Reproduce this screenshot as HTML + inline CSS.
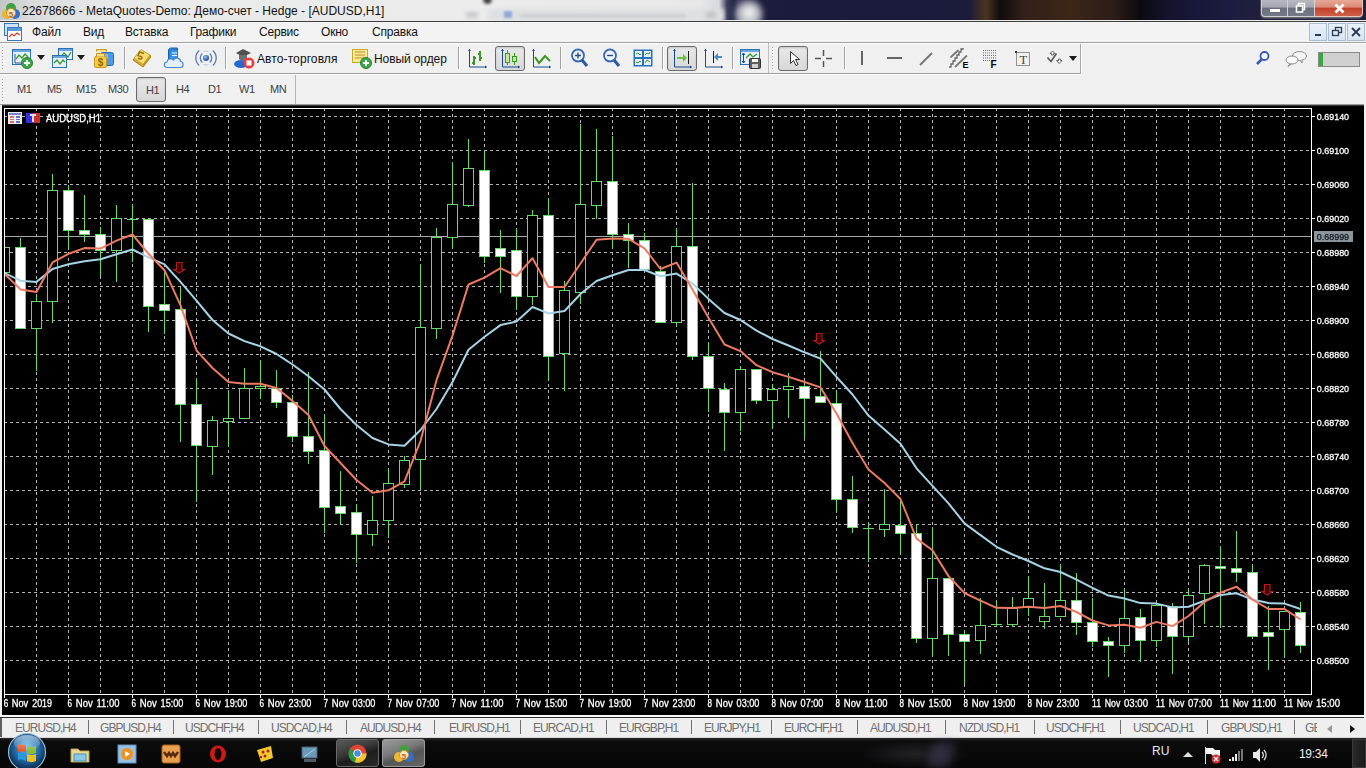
<!DOCTYPE html>
<html><head><meta charset="utf-8"><style>
*{box-sizing:border-box}
body{margin:0;width:1366px;height:768px;overflow:hidden;position:relative;background:#f0f0f0;font-family:"Liberation Sans",sans-serif;}
.a{position:absolute}
svg.a{overflow:visible}
</style></head><body>
<div class="a" style="left:0;top:0;width:1366px;height:21px;background:linear-gradient(90deg,#c4c6c8 0,#d8dadb 30px,#e8e9e9 110px,#ececec 480px,#e8e8e9 700px,#d8d9dc 719px,#3c3c5c 727px,#262648 734px,#3a3a5a 738px,#1c1c3e 762px,#1a1a3c 900px,#1c1c3a 970px,#4a3420 986px,#100c0c 1000px,#34201a 1025px,#3c2618 1070px,#2c1c18 1115px,#0c0a10 1140px,#141430 1170px,#1c1c42 1230px,#20203c 1260px)"></div>
<div class="a" style="left:736px;top:1px;width:26px;height:26px;border-radius:50%;background:#c4c8cc;filter:blur(3px)"></div>
<div class="a" style="left:744px;top:8px;width:10px;height:10px;border-radius:50%;background:#e8eaec;filter:blur(2px)"></div>
<div class="a" style="left:0;top:20px;width:1366px;height:1px;background:#eaeaea"></div>
<div class="a" style="left:488px;top:9px;width:236px;height:12px;background:#dedfe1;filter:blur(2px)"></div>
<div class="a" style="left:520px;top:14px;width:165px;height:4px;background:#cfd0d3;filter:blur(1.5px)"></div>
<div class="a" style="left:504px;top:11px;width:8px;height:7px;background:#8fa8d8;filter:blur(1px)"></div>
<div class="a" style="left:483px;top:-4px;width:9px;height:8px;border-radius:50%;background:#444;filter:blur(1.5px)"></div>
<div class="a" style="left:466px;top:12px;width:12px;height:6px;background:#c8c8cc;filter:blur(2px)"></div>
<div class="a" style="left:706px;top:12px;width:10px;height:6px;background:#c0c0c4;filter:blur(2px)"></div>
<svg class="a" style="left:1px;top:1px" width="20" height="20" viewBox="0 0 20 20"><circle cx="6" cy="13" r="5" fill="#e8b830"/><circle cx="14" cy="13" r="5" fill="#3070c8"/><circle cx="10" cy="7" r="5" fill="#40a040"/><circle cx="10" cy="12" r="4.5" fill="#f4e8c0" stroke="#d89030" stroke-width="1"/><text x="10" y="15.5" font-size="8" font-family="Liberation Sans" font-weight="bold" fill="#c86020" text-anchor="middle">5</text></svg>
<div class="a" style="left:22px;top:5px;font-size:12px;color:#111;white-space:nowrap;line-height:1">22678666 - MetaQuotes-Demo: Демо-счет - Hedge - [AUDUSD,H1]</div>
<div class="a" style="left:1260px;top:0;width:103px;height:19px;border:1px solid #4a4a5a;border-top:none;border-radius:0 0 5px 5px;background:#666"></div>
<div class="a" style="left:1261px;top:0;width:27px;height:17px;border-radius:0 0 0 4px;background:linear-gradient(#b8b8c0 0,#a4a6ae 45%,#6c707e 50%,#747888 100%);border:1px solid #d0d0d8;border-top:none"></div>
<div class="a" style="left:1288px;top:0;width:27px;height:17px;background:linear-gradient(#b8b8c0 0,#a4a6ae 45%,#6c707e 50%,#747888 100%);border:1px solid #d0d0d8;border-top:none;border-left:none"></div>
<div class="a" style="left:1315px;top:0;width:48px;height:17px;border-radius:0 0 4px 0;background:linear-gradient(#e8a898 0,#dc8a76 45%,#c4402a 50%,#d06048 100%);border:1px solid #e8c8c0;border-top:none;border-left:none"></div>
<div class="a" style="left:1270px;top:9px;width:10px;height:3px;background:#fff;box-shadow:0 0 1px #333"></div>
<svg class="a" style="left:1295px;top:2px" width="12" height="12" viewBox="0 0 12 12"><rect x="3.5" y="1.5" width="6" height="6" fill="none" stroke="#fff" stroke-width="1.6"/><rect x="1.5" y="4" width="6" height="6" fill="#666" stroke="#fff" stroke-width="1.6"/></svg>
<svg class="a" style="left:1333px;top:2px" width="13" height="13" viewBox="0 0 13 13"><path d="M2.5 2.5L10.5 10.5M10.5 2.5L2.5 10.5" stroke="#fff" stroke-width="2.8"/></svg>
<div class="a" style="left:0;top:21px;width:1366px;height:1px;background:#404040"></div>
<div class="a" style="left:0;top:22px;width:1366px;height:20px;background:#f3f3f3"></div>
<div class="a" style="left:0;top:42px;width:1366px;height:1px;background:#a0a0a0"></div>
<div class="a" style="left:0;top:43px;width:1366px;height:1px;background:#fdfdfd"></div>
<svg class="a" style="left:3px;top:22px" width="20" height="20" viewBox="0 0 20 20"><rect x="1.5" y="1.5" width="14" height="12" fill="#cfe2f6" stroke="#3a78c0"/><rect x="4.5" y="5.5" width="14" height="13" fill="#fff" stroke="#3a78c0"/><rect x="5" y="6" width="13" height="3" fill="#5b9ad8"/><path d="M6 15l3-3 2 2 3-3 3 2" fill="none" stroke="#d04020" stroke-width="1.2"/></svg>
<div class="a" style="left:32px;top:26px;font-size:12px;color:#111;white-space:nowrap;line-height:1;letter-spacing:-0.2px">Файл</div>
<div class="a" style="left:83px;top:26px;font-size:12px;color:#111;white-space:nowrap;line-height:1;letter-spacing:-0.2px">Вид</div>
<div class="a" style="left:125px;top:26px;font-size:12px;color:#111;white-space:nowrap;line-height:1;letter-spacing:-0.2px">Вставка</div>
<div class="a" style="left:190px;top:26px;font-size:12px;color:#111;white-space:nowrap;line-height:1;letter-spacing:-0.2px">Графики</div>
<div class="a" style="left:259px;top:26px;font-size:12px;color:#111;white-space:nowrap;line-height:1;letter-spacing:-0.2px">Сервис</div>
<div class="a" style="left:321px;top:26px;font-size:12px;color:#111;white-space:nowrap;line-height:1;letter-spacing:-0.2px">Окно</div>
<div class="a" style="left:372px;top:26px;font-size:12px;color:#111;white-space:nowrap;line-height:1;letter-spacing:-0.2px">Справка</div>
<div class="a" style="left:1309px;top:23px;width:18px;height:18px;background:linear-gradient(#eaf2fa,#d6e4f2);border:1px solid #a9bdd6"></div>
<svg class="a" style="left:1309px;top:23px" width="18" height="18" viewBox="0 0 18 18"><rect x="6" y="11" width="6" height="2" fill="#2a3a50"/></svg>
<div class="a" style="left:1328px;top:23px;width:18px;height:18px;background:linear-gradient(#eaf2fa,#d6e4f2);border:1px solid #a9bdd6"></div>
<svg class="a" style="left:1328px;top:23px" width="18" height="18" viewBox="0 0 18 18"><rect x="7.5" y="4.5" width="6" height="5" fill="none" stroke="#2a3a50" stroke-width="1.3"/><rect x="4.5" y="7.5" width="6" height="5" fill="#dde8f4" stroke="#2a3a50" stroke-width="1.3"/></svg>
<div class="a" style="left:1347px;top:23px;width:18px;height:18px;background:linear-gradient(#eaf2fa,#d6e4f2);border:1px solid #a9bdd6"></div>
<svg class="a" style="left:1347px;top:23px" width="18" height="18" viewBox="0 0 18 18"><path d="M5 5L13 13M13 5L5 13" stroke="#2a3a50" stroke-width="1.8"/></svg>
<div class="a" style="left:0;top:44px;width:1366px;height:29px;background:#f0f0f0"></div>
<div class="a" style="left:0;top:73px;width:1081px;height:1px;background:#a0a0a0"></div>
<div class="a" style="left:0;top:74px;width:1081px;height:1px;background:#fdfdfd"></div>
<svg class="a" style="left:1px;top:45px" width="4" height="27" viewBox="0 0 4 27"><rect x="1" y="2" width="1" height="1" fill="#a8a8a8"/><rect x="2" y="3" width="1" height="1" fill="#fff"/><rect x="1" y="5" width="1" height="1" fill="#a8a8a8"/><rect x="2" y="6" width="1" height="1" fill="#fff"/><rect x="1" y="8" width="1" height="1" fill="#a8a8a8"/><rect x="2" y="9" width="1" height="1" fill="#fff"/><rect x="1" y="11" width="1" height="1" fill="#a8a8a8"/><rect x="2" y="12" width="1" height="1" fill="#fff"/><rect x="1" y="14" width="1" height="1" fill="#a8a8a8"/><rect x="2" y="15" width="1" height="1" fill="#fff"/><rect x="1" y="17" width="1" height="1" fill="#a8a8a8"/><rect x="2" y="18" width="1" height="1" fill="#fff"/><rect x="1" y="20" width="1" height="1" fill="#a8a8a8"/><rect x="2" y="21" width="1" height="1" fill="#fff"/><rect x="1" y="23" width="1" height="1" fill="#a8a8a8"/><rect x="2" y="24" width="1" height="1" fill="#fff"/></svg>
<svg class="a" style="left:12px;top:48px" width="22" height="21" viewBox="0 0 22 21"><rect x="0.5" y="1.5" width="18" height="15" fill="#e6f0fa" stroke="#2f6fb8"/><rect x="1" y="2" width="17" height="2" fill="#6aa6de"/><path d="M3 6v9h13" stroke="#2a5a90" fill="none"/><path d="M4 11l3-4 3 3 3-4 3 3" stroke="#3a9a30" fill="none" stroke-width="1.3"/><circle cx="15" cy="15" r="5.5" fill="#3aa84a" stroke="#2a8030"/><path d="M12 15h6M15 12v6" stroke="#fff" stroke-width="1.8"/></svg>
<svg class="a" style="left:37px;top:55px" width="8" height="5" viewBox="0 0 8 5"><path d="M0 0h8L4 5z" fill="#1a1a1a"/></svg>
<svg class="a" style="left:52px;top:48px" width="22" height="21" viewBox="0 0 22 21"><rect x="6.5" y="0.5" width="14" height="11" fill="#e6f0fa" stroke="#2f6fb8"/><rect x="7" y="1" width="13" height="2" fill="#6aa6de"/><path d="M8 10l4-5 4 4 3-5" stroke="#3a9a30" fill="none" stroke-width="1.2"/><rect x="0.5" y="7.5" width="14" height="12" fill="#e6f0fa" stroke="#2f6fb8"/><rect x="1" y="8" width="13" height="2" fill="#6aa6de"/><path d="M2 15l3-3 3 4 3-4 2 2" stroke="#3a9a30" fill="none" stroke-width="1.3"/></svg>
<svg class="a" style="left:77px;top:55px" width="8" height="5" viewBox="0 0 8 5"><path d="M0 0h8L4 5z" fill="#1a1a1a"/></svg>
<svg class="a" style="left:93px;top:47px" width="22" height="22" viewBox="0 0 22 22"><path d="M3.5 4.5v-2h10v2" fill="#f4d870" stroke="#c8a030"/><rect x="7.5" y="5.5" width="13" height="13" rx="2" fill="#4a9ae8" stroke="#2a68b0"/><rect x="9" y="7" width="6" height="5" fill="#9ad0f8" opacity=".6"/><rect x="1.5" y="9.5" width="12" height="11" rx="1.5" fill="#f4cc40" stroke="#c89820"/><path d="M3.5 9.5v-3h8v3" fill="#f8e080" stroke="#c89820"/><text x="7.5" y="19" font-size="10" font-weight="bold" font-family="Liberation Sans" fill="#8a6a10" text-anchor="middle">$</text></svg>
<div class="a" style="left:124px;top:47px;width:1px;height:22px;background:#a0a0a0"></div><div class="a" style="left:125px;top:47px;width:1px;height:22px;background:#fff"></div>
<svg class="a" style="left:131px;top:47px" width="22" height="22" viewBox="0 0 22 22"><path d="M2 13L10 3l10 6-8 11z" fill="#d8b030" stroke="#a88018"/><path d="M3 11L10 2.5l9 5.5-7 9.5z" fill="#f4dc70" stroke="#c09a28" stroke-width=".8"/><path d="M12 17.5l8-9v2l-8 10z" fill="#b89020"/><path d="M13 6.5l-4.5-1.5-1.5 3.5 3 1c1.5.5 1 3-1 2.5l-2-.8" fill="none" stroke="#9a7010" stroke-width="1.5"/></svg>
<svg class="a" style="left:163px;top:47px" width="22" height="22" viewBox="0 0 22 22"><path d="M5.5 2.5l2-1.5h7v11h-9z" fill="#2a80d8" stroke="#1a60b0"/><rect x="7.5" y="3.5" width="7" height="9" fill="#3a98e8"/><path d="M9 6h5M9 8.5h5" stroke="#e8f4ff" stroke-width="1.2"/><path d="M4 20.5c-3.5 0-3.5-5.5 0-5.5.5-3.5 4.5-4 6.5-2 1.5-3 7-2.5 7 1.5 3.5 0 3.5 6 0 6z" fill="#e4f0fa" stroke="#4a88cc" stroke-width="1.2"/></svg>
<svg class="a" style="left:195px;top:47px" width="22" height="22" viewBox="0 0 22 22"><defs><radialGradient id="sg" cx="40%" cy="35%"><stop offset="0" stop-color="#a8c8f0"/><stop offset="1" stop-color="#2a5ab0"/></radialGradient></defs><circle cx="11" cy="11" r="3" fill="url(#sg)"/><path d="M7.3 6.5a6 6 0 0 0 0 9M14.7 6.5a6 6 0 0 1 0 9M4.2 3.5a10 10 0 0 0 0 15M17.8 3.5a10 10 0 0 1 0 15" stroke="#5a78b8" fill="none" stroke-width="1.3"/><path d="M8.5 4.5a7 7 0 0 1 5 0M8.5 17.5a7 7 0 0 0 5 0" stroke="#b8c8e0" fill="none"/></svg>
<div class="a" style="left:225px;top:47px;width:1px;height:22px;background:#a0a0a0"></div><div class="a" style="left:226px;top:47px;width:1px;height:22px;background:#fff"></div>
<svg class="a" style="left:233px;top:48px" width="22" height="21" viewBox="0 0 22 21"><path d="M3 5l7-4 8 4-8 4z" fill="#505050"/><path d="M6 7v4c2 2 6 2 8 0V7" fill="#707070"/><ellipse cx="8" cy="16" rx="7" ry="4" fill="#2a6ad0"/><circle cx="16" cy="15" r="5.5" fill="#e84040"/><rect x="13.5" y="12.5" width="5" height="5" fill="#fff"/></svg>
<div class="a" style="left:257px;top:53px;font-size:12px;color:#111;white-space:nowrap;line-height:1;letter-spacing:0.1px">Авто-торговля</div>
<svg class="a" style="left:351px;top:48px" width="22" height="21" viewBox="0 0 22 21"><rect x="1.5" y="1.5" width="15" height="13" fill="#f8e890" stroke="#c8a830"/><path d="M4 4h10M4 7h10M4 10h10" stroke="#b89030"/><circle cx="15" cy="15" r="5.5" fill="#3aa84a" stroke="#2a8030"/><path d="M12 15h6M15 12v6" stroke="#fff" stroke-width="1.8"/></svg>
<div class="a" style="left:374px;top:53px;font-size:12px;color:#111;white-space:nowrap;line-height:1;letter-spacing:-0.1px">Новый ордер</div>
<div class="a" style="left:458px;top:47px;width:1px;height:22px;background:#a0a0a0"></div><div class="a" style="left:459px;top:47px;width:1px;height:22px;background:#fff"></div>
<svg class="a" style="left:467px;top:48px" width="21" height="21" viewBox="0 0 21 21"><path d="M2.5 1v18h17" stroke="#1a4a90" fill="none"/><path d="M1 3l1.5-2 1.5 2M18 17.5l2 1.5-2 1.5" fill="#1a4a90"/><path d="M7 8v9M5 15h2M7 10h2M13 3v10M11 6h2M13 10h2" stroke="#3a9a20" stroke-width="2"/></svg>
<div class="a" style="left:495px;top:46px;width:30px;height:25px;border:1px solid #6a6a6a;border-radius:3px;background:linear-gradient(#e8e8e8,#d8d8d8);box-shadow:inset 0 1px 2px rgba(0,0,0,.15)"></div>
<svg class="a" style="left:500px;top:48px" width="21" height="21" viewBox="0 0 21 21"><path d="M2.5 1v18h17" stroke="#1a4a90" fill="none"/><path d="M1 3l1.5-2 1.5 2M18 17.5l2 1.5-2 1.5" fill="#1a4a90"/><path d="M7.5 2v15M14.5 5v12" stroke="#3a9a20"/><rect x="5.5" y="5.5" width="4" height="9" fill="#c8e8a0" stroke="#3a9a20"/><rect x="12.5" y="8.5" width="4" height="5" fill="#c8e8a0" stroke="#3a9a20"/></svg>
<svg class="a" style="left:531px;top:48px" width="21" height="21" viewBox="0 0 21 21"><path d="M2.5 1v18h17" stroke="#1a4a90" fill="none"/><path d="M1 3l1.5-2 1.5 2M18 17.5l2 1.5-2 1.5" fill="#1a4a90"/><path d="M4 9l4 6 6-7 5 5" stroke="#3a9a20" fill="none" stroke-width="2"/></svg>
<div class="a" style="left:560px;top:47px;width:1px;height:22px;background:#a0a0a0"></div><div class="a" style="left:561px;top:47px;width:1px;height:22px;background:#fff"></div>
<svg class="a" style="left:570px;top:48px" width="20" height="21" viewBox="0 0 20 21"><circle cx="8" cy="7.5" r="6" fill="#eef4fc" stroke="#3a68b0" stroke-width="1.8"/><path d="M5 7.5h6M8 4.5v6" stroke="#2a4a80" stroke-width="1.4"/><path d="M12 12l5 6" stroke="#2a58a0" stroke-width="3"/></svg>
<svg class="a" style="left:602px;top:48px" width="20" height="21" viewBox="0 0 20 21"><circle cx="8" cy="7.5" r="6" fill="#eef4fc" stroke="#3a68b0" stroke-width="1.8"/><path d="M5 7.5h6" stroke="#2a4a80" stroke-width="1.4"/><path d="M12 12l5 6" stroke="#2a58a0" stroke-width="3"/></svg>
<svg class="a" style="left:633px;top:48px" width="21" height="21" viewBox="0 0 21 21"><rect x="0.5" y="1.5" width="19" height="17" fill="#2a70c0"/><rect x="2" y="3" width="7" height="6" fill="#e8f2fc"/><rect x="11" y="3" width="7" height="6" fill="#e8f2fc"/><rect x="2" y="11" width="7" height="6" fill="#e8f2fc"/><rect x="11" y="11" width="7" height="6" fill="#e8f2fc"/><path d="M3 6l2-1 2 2 1-1M12 7l2-2 2 1 1-2M3 14l2 1 2-2 1 1M12 15l2-3 3 2" stroke="#3a9a30" fill="none"/></svg>
<div class="a" style="left:662px;top:47px;width:1px;height:22px;background:#a0a0a0"></div><div class="a" style="left:663px;top:47px;width:1px;height:22px;background:#fff"></div>
<div class="a" style="left:667px;top:46px;width:30px;height:25px;border:1px solid #6a6a6a;border-radius:3px;background:linear-gradient(#e8e8e8,#d8d8d8);box-shadow:inset 0 1px 2px rgba(0,0,0,.15)"></div>
<svg class="a" style="left:672px;top:48px" width="21" height="21" viewBox="0 0 21 21"><path d="M2.5 1v18h17" stroke="#1a4a90" fill="none"/><path d="M1 3l1.5-2 1.5 2M18 17.5l2 1.5-2 1.5" fill="#1a4a90"/><path d="M16.5 3v13" stroke="#1a1a1a"/><path d="M5 9h6V6l4 4-4 4v-3H5z" fill="#6ac040"/></svg>
<svg class="a" style="left:703px;top:48px" width="21" height="21" viewBox="0 0 21 21"><path d="M2.5 1v18h17" stroke="#1a4a90" fill="none"/><path d="M1 3l1.5-2 1.5 2M18 17.5l2 1.5-2 1.5" fill="#1a4a90"/><path d="M10.5 3v12" stroke="#1a1a1a"/><path d="M19 8h-4V5l-4 4 4 4v-3h4z" fill="#4a8ad0"/></svg>
<div class="a" style="left:732px;top:47px;width:1px;height:22px;background:#a0a0a0"></div><div class="a" style="left:733px;top:47px;width:1px;height:22px;background:#fff"></div>
<svg class="a" style="left:740px;top:48px" width="22" height="21" viewBox="0 0 22 21"><rect x="0.5" y="1.5" width="19" height="15" fill="#e6f0fa" stroke="#2f6fb8"/><rect x="1" y="2" width="18" height="2" fill="#6aa6de"/><path d="M3.5 5v10M2 7l1.5-2 1.5 2M2 13l1.5 2 1.5-2" stroke="#1a4a90" fill="none"/><path d="M6 10l4-4 3 3 4-3" stroke="#3a9a30" fill="none" stroke-width="1.3"/><rect x="9.5" y="10.5" width="11" height="10" rx="1" fill="#606060" stroke="#303030"/><rect x="12" y="11" width="6" height="3" fill="#fff"/><rect x="12" y="16" width="6" height="4" fill="#d0d0d0"/></svg>
<div class="a" style="left:768px;top:43px;width:1px;height:30px;background:#c0c0c0"></div>
<svg class="a" style="left:771px;top:45px" width="4" height="27" viewBox="0 0 4 27"><rect x="1" y="2" width="1" height="1" fill="#a8a8a8"/><rect x="2" y="3" width="1" height="1" fill="#fff"/><rect x="1" y="5" width="1" height="1" fill="#a8a8a8"/><rect x="2" y="6" width="1" height="1" fill="#fff"/><rect x="1" y="8" width="1" height="1" fill="#a8a8a8"/><rect x="2" y="9" width="1" height="1" fill="#fff"/><rect x="1" y="11" width="1" height="1" fill="#a8a8a8"/><rect x="2" y="12" width="1" height="1" fill="#fff"/><rect x="1" y="14" width="1" height="1" fill="#a8a8a8"/><rect x="2" y="15" width="1" height="1" fill="#fff"/><rect x="1" y="17" width="1" height="1" fill="#a8a8a8"/><rect x="2" y="18" width="1" height="1" fill="#fff"/><rect x="1" y="20" width="1" height="1" fill="#a8a8a8"/><rect x="2" y="21" width="1" height="1" fill="#fff"/><rect x="1" y="23" width="1" height="1" fill="#a8a8a8"/><rect x="2" y="24" width="1" height="1" fill="#fff"/></svg>
<div class="a" style="left:778px;top:46px;width:30px;height:25px;border:1px solid #6a6a6a;border-radius:3px;background:linear-gradient(#e8e8e8,#d8d8d8);box-shadow:inset 0 1px 2px rgba(0,0,0,.15)"></div>
<svg class="a" style="left:783px;top:48px" width="21" height="21" viewBox="0 0 21 21"><path d="M7.5 3.5v12l3-3 2.5 5 2-1-2.5-5h4z" fill="#fff" stroke="#333"/></svg>
<svg class="a" style="left:813px;top:48px" width="21" height="21" viewBox="0 0 21 21"><path d="M10.5 2v6M10.5 13v6M2 10.5h6M13 10.5h6" stroke="#555" stroke-width="1.5"/></svg>
<div class="a" style="left:844px;top:47px;width:1px;height:22px;background:#a0a0a0"></div><div class="a" style="left:845px;top:47px;width:1px;height:22px;background:#fff"></div>
<svg class="a" style="left:855px;top:48px" width="14" height="21" viewBox="0 0 14 21"><path d="M7 3v14" stroke="#666" stroke-width="2"/></svg>
<svg class="a" style="left:884px;top:48px" width="20" height="21" viewBox="0 0 20 21"><path d="M3 10h15" stroke="#666" stroke-width="2"/></svg>
<svg class="a" style="left:916px;top:48px" width="20" height="21" viewBox="0 0 20 21"><path d="M4 17L16 5" stroke="#777" stroke-width="2"/></svg>
<svg class="a" style="left:947px;top:46px" width="23" height="24" viewBox="0 0 23 24"><path d="M4 11L11 4.5M8.5 20.5L19.5 10" stroke="#7a7a7a" stroke-width="1.8" stroke-linecap="round"/><path d="M2 21h2v-3h2v-3h2v-3h2v-3h2V6h2V3h2v-1" stroke="#666" fill="none" stroke-width="1.3"/><text x="15.5" y="22" font-size="9" font-weight="bold" font-family="Liberation Sans" fill="#000">E</text></svg>
<svg class="a" style="left:982px;top:47px" width="20" height="23" viewBox="0 0 20 23"><path d="M1 3.5h14M1 6h14M1 8.5h14M1 11h14M1 13.5h8" stroke="#6a6a6a" stroke-dasharray="1 1"/><text x="8.5" y="21" font-size="10" font-weight="bold" font-family="Liberation Sans" fill="#000">F</text></svg>
<svg class="a" style="left:1013px;top:48px" width="20" height="21" viewBox="0 0 20 21"><rect x="3.5" y="4.5" width="13" height="13" fill="none" stroke="#333" stroke-dasharray="1 1"/><rect x="2" y="3" width="2" height="2" fill="#333"/><text x="10.2" y="15.5" font-size="12.5" font-family="Liberation Serif" fill="#444" text-anchor="middle">T</text></svg>
<svg class="a" style="left:1045px;top:47px" width="20" height="22" viewBox="0 0 20 22"><path d="M2.5 10.5l3.5 4 5.5-8" stroke="#555" fill="none" stroke-width="1.6"/><path d="M5 6.5l2.5-2.5 2.5 2.5h-1.5v1.5h-2V6.5z" fill="#fff" stroke="#666"/><path d="M11.5 13.5h2v-1.5h2v1.5h1.5l-2.75 3z" fill="#fff" stroke="#666"/></svg>
<svg class="a" style="left:1069px;top:56px" width="8" height="5" viewBox="0 0 8 5"><path d="M0 0h8L4 5z" fill="#1a1a1a"/></svg>
<div class="a" style="left:1080px;top:44px;width:1px;height:30px;background:#a8a8a8"></div><div class="a" style="left:1081px;top:44px;width:1px;height:30px;background:#fff"></div>
<svg class="a" style="left:1255px;top:50px" width="16" height="16" viewBox="0 0 16 16"><circle cx="9.5" cy="6" r="4" fill="#f4f8fc" stroke="#3a5ab0" stroke-width="1.8"/><path d="M7 9L2 14" stroke="#3a5ab0" stroke-width="2.6"/></svg>
<svg class="a" style="left:1285px;top:50px" width="23" height="18" viewBox="0 0 23 18"><ellipse cx="14.5" cy="6" rx="7" ry="4.5" fill="#f4f4f4" stroke="#8a8a8a"/><path d="M15 10l2 3v-3" fill="#f4f4f4" stroke="#8a8a8a"/><ellipse cx="7" cy="10" rx="6" ry="4" fill="#fafafa" stroke="#8a8a8a"/><path d="M5 13.5l-2 3 4-3" fill="#fafafa" stroke="#8a8a8a"/></svg>
<div class="a" style="left:1318px;top:52px;width:42px;height:15px;background:#d0d0d0;border:1px solid #8a8a8a"></div>
<div class="a" style="left:1319px;top:53px;width:4px;height:13px;background:#3aa840"></div>
<div class="a" style="left:0;top:75px;width:1366px;height:30px;background:#f0f0f0"></div>
<svg class="a" style="left:1px;top:77px" width="4" height="27" viewBox="0 0 4 27"><rect x="1" y="2" width="1" height="1" fill="#a8a8a8"/><rect x="2" y="3" width="1" height="1" fill="#fff"/><rect x="1" y="5" width="1" height="1" fill="#a8a8a8"/><rect x="2" y="6" width="1" height="1" fill="#fff"/><rect x="1" y="8" width="1" height="1" fill="#a8a8a8"/><rect x="2" y="9" width="1" height="1" fill="#fff"/><rect x="1" y="11" width="1" height="1" fill="#a8a8a8"/><rect x="2" y="12" width="1" height="1" fill="#fff"/><rect x="1" y="14" width="1" height="1" fill="#a8a8a8"/><rect x="2" y="15" width="1" height="1" fill="#fff"/><rect x="1" y="17" width="1" height="1" fill="#a8a8a8"/><rect x="2" y="18" width="1" height="1" fill="#fff"/><rect x="1" y="20" width="1" height="1" fill="#a8a8a8"/><rect x="2" y="21" width="1" height="1" fill="#fff"/><rect x="1" y="23" width="1" height="1" fill="#a8a8a8"/><rect x="2" y="24" width="1" height="1" fill="#fff"/></svg>
<div class="a" style="left:136px;top:77px;width:30px;height:25px;border:1px solid #6a6a6a;border-radius:3px;background:linear-gradient(#e8e8e8,#d8d8d8);box-shadow:inset 0 1px 2px rgba(0,0,0,.15)"></div>
<div class="a" style="left:17px;top:84px;font-size:11px;color:#404040;white-space:nowrap;line-height:1;letter-spacing:-0.35px">M1</div>
<div class="a" style="left:47px;top:84px;font-size:11px;color:#404040;white-space:nowrap;line-height:1;letter-spacing:-0.35px">M5</div>
<div class="a" style="left:76px;top:84px;font-size:11px;color:#404040;white-space:nowrap;line-height:1;letter-spacing:-0.35px">M15</div>
<div class="a" style="left:108px;top:84px;font-size:11px;color:#404040;white-space:nowrap;line-height:1;letter-spacing:-0.35px">M30</div>
<div class="a" style="left:146px;top:85px;font-size:11px;color:#404040;white-space:nowrap;line-height:1;letter-spacing:-0.35px">H1</div>
<div class="a" style="left:176px;top:84px;font-size:11px;color:#404040;white-space:nowrap;line-height:1;letter-spacing:-0.35px">H4</div>
<div class="a" style="left:208px;top:84px;font-size:11px;color:#404040;white-space:nowrap;line-height:1;letter-spacing:-0.35px">D1</div>
<div class="a" style="left:239px;top:84px;font-size:11px;color:#404040;white-space:nowrap;line-height:1;letter-spacing:-0.35px">W1</div>
<div class="a" style="left:270px;top:84px;font-size:11px;color:#404040;white-space:nowrap;line-height:1;letter-spacing:-0.35px">MN</div>
<div class="a" style="left:295px;top:75px;width:1px;height:30px;background:#b4b4b4"></div>
<svg width="1366" height="612" style="position:absolute;left:0;top:104px;will-change:transform" shape-rendering="crispEdges">
<rect x="0" y="0" width="1366" height="1" fill="#9a9a9a"/><rect x="2" y="1" width="1362" height="1" fill="#383838"/><rect x="2" y="2" width="1362" height="610" fill="#000"/>
<defs><clipPath id="cp"><rect x="5" y="5" width="1306" height="585"/></clipPath></defs>
<path d="M36.5 4V590M68.5 4V590M100.5 4V590M132.5 4V590M164.5 4V590M196.5 4V590M228.5 4V590M260.5 4V590M292.5 4V590M324.5 4V590M356.5 4V590M388.5 4V590M420.5 4V590M452.5 4V590M484.5 4V590M516.5 4V590M548.5 4V590M580.5 4V590M612.5 4V590M644.5 4V590M676.5 4V590M708.5 4V590M740.5 4V590M772.5 4V590M804.5 4V590M836.5 4V590M868.5 4V590M900.5 4V590M932.5 4V590M964.5 4V590M996.5 4V590M1028.5 4V590M1060.5 4V590M1092.5 4V590M1124.5 4V590M1156.5 4V590M1188.5 4V590M1220.5 4V590M1252.5 4V590M1284.5 4V590M4 12.5H1311M4 46.5H1311M4 80.5H1311M4 114.5H1311M4 148.5H1311M4 182.5H1311M4 216.5H1311M4 250.5H1311M4 284.5H1311M4 318.5H1311M4 352.5H1311M4 386.5H1311M4 420.5H1311M4 454.5H1311M4 488.5H1311M4 522.5H1311M4 556.5H1311" stroke="#b4b4b4" stroke-width="1" stroke-dasharray="3 3" fill="none"/>
<g clip-path="url(#cp)">
<path d="M5 132.5H1311" stroke="#a8a8a8" stroke-width="1"/>
<rect x="4" y="143" width="1" height="26" fill="#66da66"/>
<rect x="-0.5" y="143.5" width="10" height="25" fill="#000" stroke="#66da66" stroke-width="1"/>
<rect x="20" y="134" width="1" height="91" fill="#66da66"/>
<rect x="15.5" y="143.5" width="10" height="81" fill="#fff" stroke="#66da66" stroke-width="1"/>
<rect x="36" y="191" width="1" height="76" fill="#66da66"/>
<rect x="31.5" y="197.5" width="10" height="27" fill="#000" stroke="#66da66" stroke-width="1"/>
<rect x="52" y="70" width="1" height="149" fill="#66da66"/>
<rect x="47.5" y="86.5" width="10" height="111" fill="#000" stroke="#66da66" stroke-width="1"/>
<rect x="68" y="81" width="1" height="65" fill="#66da66"/>
<rect x="63.5" y="86.5" width="10" height="40" fill="#fff" stroke="#66da66" stroke-width="1"/>
<rect x="84" y="91" width="1" height="47" fill="#66da66"/>
<rect x="79.5" y="126.5" width="10" height="4" fill="#fff" stroke="#66da66" stroke-width="1"/>
<rect x="100" y="123" width="1" height="49" fill="#66da66"/>
<rect x="95.5" y="130.5" width="10" height="16" fill="#fff" stroke="#66da66" stroke-width="1"/>
<rect x="116" y="101" width="1" height="77" fill="#66da66"/>
<rect x="111.5" y="114.5" width="10" height="32" fill="#000" stroke="#66da66" stroke-width="1"/>
<rect x="132" y="100" width="1" height="58" fill="#66da66"/>
<rect x="127" y="115" width="11" height="1" fill="#66da66"/>
<rect x="148" y="115" width="1" height="113" fill="#66da66"/>
<rect x="143.5" y="115.5" width="10" height="87" fill="#fff" stroke="#66da66" stroke-width="1"/>
<rect x="164" y="167" width="1" height="63" fill="#66da66"/>
<rect x="159.5" y="200.5" width="10" height="6" fill="#fff" stroke="#66da66" stroke-width="1"/>
<rect x="180" y="183" width="1" height="155" fill="#66da66"/>
<rect x="175.5" y="205.5" width="10" height="95" fill="#fff" stroke="#66da66" stroke-width="1"/>
<rect x="196" y="275" width="1" height="123" fill="#66da66"/>
<rect x="191.5" y="300.5" width="10" height="41" fill="#fff" stroke="#66da66" stroke-width="1"/>
<rect x="212" y="312" width="1" height="59" fill="#66da66"/>
<rect x="207.5" y="316.5" width="10" height="26" fill="#000" stroke="#66da66" stroke-width="1"/>
<rect x="228" y="286" width="1" height="57" fill="#66da66"/>
<rect x="223.5" y="314.5" width="10" height="3" fill="#000" stroke="#66da66" stroke-width="1"/>
<rect x="244" y="264" width="1" height="51" fill="#66da66"/>
<rect x="239.5" y="284.5" width="10" height="30" fill="#000" stroke="#66da66" stroke-width="1"/>
<rect x="260" y="256" width="1" height="39" fill="#66da66"/>
<rect x="255.5" y="282.5" width="10" height="2" fill="#000" stroke="#66da66" stroke-width="1"/>
<rect x="276" y="266" width="1" height="38" fill="#66da66"/>
<rect x="271.5" y="284.5" width="10" height="14" fill="#fff" stroke="#66da66" stroke-width="1"/>
<rect x="292" y="291" width="1" height="47" fill="#66da66"/>
<rect x="287.5" y="298.5" width="10" height="34" fill="#fff" stroke="#66da66" stroke-width="1"/>
<rect x="308" y="268" width="1" height="92" fill="#66da66"/>
<rect x="303.5" y="332.5" width="10" height="15" fill="#fff" stroke="#66da66" stroke-width="1"/>
<rect x="324" y="310" width="1" height="119" fill="#66da66"/>
<rect x="319.5" y="346.5" width="10" height="57" fill="#fff" stroke="#66da66" stroke-width="1"/>
<rect x="340" y="367" width="1" height="54" fill="#66da66"/>
<rect x="335.5" y="402.5" width="10" height="7" fill="#fff" stroke="#66da66" stroke-width="1"/>
<rect x="356" y="400" width="1" height="59" fill="#66da66"/>
<rect x="351.5" y="408.5" width="10" height="22" fill="#fff" stroke="#66da66" stroke-width="1"/>
<rect x="372" y="392" width="1" height="50" fill="#66da66"/>
<rect x="367.5" y="416.5" width="10" height="14" fill="#000" stroke="#66da66" stroke-width="1"/>
<rect x="388" y="365" width="1" height="69" fill="#66da66"/>
<rect x="383.5" y="379.5" width="10" height="37" fill="#000" stroke="#66da66" stroke-width="1"/>
<rect x="404" y="352" width="1" height="32" fill="#66da66"/>
<rect x="399.5" y="356.5" width="10" height="24" fill="#000" stroke="#66da66" stroke-width="1"/>
<rect x="420" y="160" width="1" height="226" fill="#66da66"/>
<rect x="415.5" y="223.5" width="10" height="132" fill="#000" stroke="#66da66" stroke-width="1"/>
<rect x="436" y="124" width="1" height="111" fill="#66da66"/>
<rect x="431.5" y="133.5" width="10" height="91" fill="#000" stroke="#66da66" stroke-width="1"/>
<rect x="452" y="58" width="1" height="87" fill="#66da66"/>
<rect x="447.5" y="100.5" width="10" height="33" fill="#000" stroke="#66da66" stroke-width="1"/>
<rect x="468" y="35" width="1" height="68" fill="#66da66"/>
<rect x="463.5" y="64.5" width="10" height="37" fill="#000" stroke="#66da66" stroke-width="1"/>
<rect x="484" y="46" width="1" height="113" fill="#66da66"/>
<rect x="479.5" y="66.5" width="10" height="86" fill="#fff" stroke="#66da66" stroke-width="1"/>
<rect x="500" y="126" width="1" height="63" fill="#66da66"/>
<rect x="495.5" y="144.5" width="10" height="8" fill="#fff" stroke="#66da66" stroke-width="1"/>
<rect x="516" y="124" width="1" height="82" fill="#66da66"/>
<rect x="511.5" y="146.5" width="10" height="46" fill="#fff" stroke="#66da66" stroke-width="1"/>
<rect x="532" y="106" width="1" height="95" fill="#66da66"/>
<rect x="527.5" y="111.5" width="10" height="81" fill="#000" stroke="#66da66" stroke-width="1"/>
<rect x="548" y="94" width="1" height="183" fill="#66da66"/>
<rect x="543.5" y="111.5" width="10" height="141" fill="#fff" stroke="#66da66" stroke-width="1"/>
<rect x="564" y="177" width="1" height="110" fill="#66da66"/>
<rect x="559.5" y="186.5" width="10" height="63" fill="#000" stroke="#66da66" stroke-width="1"/>
<rect x="580" y="20" width="1" height="180" fill="#66da66"/>
<rect x="575.5" y="100.5" width="10" height="88" fill="#000" stroke="#66da66" stroke-width="1"/>
<rect x="596" y="25" width="1" height="90" fill="#66da66"/>
<rect x="591.5" y="77.5" width="10" height="24" fill="#000" stroke="#66da66" stroke-width="1"/>
<rect x="612" y="32" width="1" height="113" fill="#66da66"/>
<rect x="607.5" y="77.5" width="10" height="53" fill="#fff" stroke="#66da66" stroke-width="1"/>
<rect x="628" y="119" width="1" height="45" fill="#66da66"/>
<rect x="623.5" y="130.5" width="10" height="6" fill="#fff" stroke="#66da66" stroke-width="1"/>
<rect x="644" y="129" width="1" height="37" fill="#66da66"/>
<rect x="639.5" y="136.5" width="10" height="29" fill="#fff" stroke="#66da66" stroke-width="1"/>
<rect x="660" y="162" width="1" height="57" fill="#66da66"/>
<rect x="655.5" y="167.5" width="10" height="51" fill="#fff" stroke="#66da66" stroke-width="1"/>
<rect x="676" y="124" width="1" height="98" fill="#66da66"/>
<rect x="671.5" y="142.5" width="10" height="76" fill="#000" stroke="#66da66" stroke-width="1"/>
<rect x="692" y="79" width="1" height="177" fill="#66da66"/>
<rect x="687.5" y="142.5" width="10" height="110" fill="#fff" stroke="#66da66" stroke-width="1"/>
<rect x="708" y="238" width="1" height="70" fill="#66da66"/>
<rect x="703.5" y="252.5" width="10" height="32" fill="#fff" stroke="#66da66" stroke-width="1"/>
<rect x="724" y="279" width="1" height="68" fill="#66da66"/>
<rect x="719.5" y="285.5" width="10" height="23" fill="#fff" stroke="#66da66" stroke-width="1"/>
<rect x="740" y="262" width="1" height="65" fill="#66da66"/>
<rect x="735.5" y="265.5" width="10" height="43" fill="#000" stroke="#66da66" stroke-width="1"/>
<rect x="756" y="265" width="1" height="35" fill="#66da66"/>
<rect x="751.5" y="265.5" width="10" height="31" fill="#fff" stroke="#66da66" stroke-width="1"/>
<rect x="772" y="280" width="1" height="45" fill="#66da66"/>
<rect x="767.5" y="285.5" width="10" height="11" fill="#000" stroke="#66da66" stroke-width="1"/>
<rect x="788" y="269" width="1" height="45" fill="#66da66"/>
<rect x="783.5" y="282.5" width="10" height="3" fill="#000" stroke="#66da66" stroke-width="1"/>
<rect x="804" y="276" width="1" height="58" fill="#66da66"/>
<rect x="799.5" y="282.5" width="10" height="12" fill="#fff" stroke="#66da66" stroke-width="1"/>
<rect x="820" y="247" width="1" height="52" fill="#66da66"/>
<rect x="815.5" y="292.5" width="10" height="6" fill="#fff" stroke="#66da66" stroke-width="1"/>
<rect x="836" y="287" width="1" height="122" fill="#66da66"/>
<rect x="831.5" y="299.5" width="10" height="96" fill="#fff" stroke="#66da66" stroke-width="1"/>
<rect x="852" y="372" width="1" height="57" fill="#66da66"/>
<rect x="847.5" y="395.5" width="10" height="28" fill="#fff" stroke="#66da66" stroke-width="1"/>
<rect x="868" y="418" width="1" height="40" fill="#66da66"/>
<rect x="863" y="424" width="11" height="1" fill="#66da66"/>
<rect x="884" y="385" width="1" height="48" fill="#66da66"/>
<rect x="879.5" y="420.5" width="10" height="5" fill="#000" stroke="#66da66" stroke-width="1"/>
<rect x="900" y="396" width="1" height="55" fill="#66da66"/>
<rect x="895.5" y="421.5" width="10" height="8" fill="#fff" stroke="#66da66" stroke-width="1"/>
<rect x="916" y="420" width="1" height="119" fill="#66da66"/>
<rect x="911.5" y="429.5" width="10" height="105" fill="#fff" stroke="#66da66" stroke-width="1"/>
<rect x="932" y="423" width="1" height="130" fill="#66da66"/>
<rect x="927.5" y="474.5" width="10" height="60" fill="#000" stroke="#66da66" stroke-width="1"/>
<rect x="948" y="474" width="1" height="78" fill="#66da66"/>
<rect x="943.5" y="474.5" width="10" height="56" fill="#fff" stroke="#66da66" stroke-width="1"/>
<rect x="964" y="526" width="1" height="54" fill="#66da66"/>
<rect x="959.5" y="530.5" width="10" height="7" fill="#fff" stroke="#66da66" stroke-width="1"/>
<rect x="980" y="494" width="1" height="56" fill="#66da66"/>
<rect x="975.5" y="521.5" width="10" height="15" fill="#000" stroke="#66da66" stroke-width="1"/>
<rect x="996" y="497" width="1" height="26" fill="#66da66"/>
<rect x="991" y="520" width="11" height="1" fill="#66da66"/>
<rect x="1012" y="493" width="1" height="30" fill="#66da66"/>
<rect x="1007.5" y="504.5" width="10" height="16" fill="#000" stroke="#66da66" stroke-width="1"/>
<rect x="1028" y="472" width="1" height="40" fill="#66da66"/>
<rect x="1023.5" y="494.5" width="10" height="9" fill="#000" stroke="#66da66" stroke-width="1"/>
<rect x="1044" y="479" width="1" height="46" fill="#66da66"/>
<rect x="1039.5" y="512.5" width="10" height="5" fill="#000" stroke="#66da66" stroke-width="1"/>
<rect x="1060" y="460" width="1" height="53" fill="#66da66"/>
<rect x="1055.5" y="496.5" width="10" height="16" fill="#000" stroke="#66da66" stroke-width="1"/>
<rect x="1076" y="469" width="1" height="62" fill="#66da66"/>
<rect x="1071.5" y="496.5" width="10" height="22" fill="#fff" stroke="#66da66" stroke-width="1"/>
<rect x="1092" y="494" width="1" height="49" fill="#66da66"/>
<rect x="1087.5" y="518.5" width="10" height="19" fill="#fff" stroke="#66da66" stroke-width="1"/>
<rect x="1108" y="533" width="1" height="40" fill="#66da66"/>
<rect x="1103.5" y="537.5" width="10" height="4" fill="#fff" stroke="#66da66" stroke-width="1"/>
<rect x="1124" y="485" width="1" height="64" fill="#66da66"/>
<rect x="1119.5" y="514.5" width="10" height="27" fill="#000" stroke="#66da66" stroke-width="1"/>
<rect x="1140" y="505" width="1" height="53" fill="#66da66"/>
<rect x="1135.5" y="513.5" width="10" height="23" fill="#fff" stroke="#66da66" stroke-width="1"/>
<rect x="1156" y="499" width="1" height="44" fill="#66da66"/>
<rect x="1151.5" y="501.5" width="10" height="35" fill="#000" stroke="#66da66" stroke-width="1"/>
<rect x="1172" y="499" width="1" height="71" fill="#66da66"/>
<rect x="1167.5" y="502.5" width="10" height="30" fill="#fff" stroke="#66da66" stroke-width="1"/>
<rect x="1188" y="485" width="1" height="53" fill="#66da66"/>
<rect x="1183.5" y="491.5" width="10" height="41" fill="#000" stroke="#66da66" stroke-width="1"/>
<rect x="1204" y="460" width="1" height="60" fill="#66da66"/>
<rect x="1199.5" y="461.5" width="10" height="28" fill="#000" stroke="#66da66" stroke-width="1"/>
<rect x="1220" y="442" width="1" height="82" fill="#66da66"/>
<rect x="1215.5" y="462.5" width="10" height="2" fill="#fff" stroke="#66da66" stroke-width="1"/>
<rect x="1236" y="427" width="1" height="51" fill="#66da66"/>
<rect x="1231.5" y="464.5" width="10" height="4" fill="#fff" stroke="#66da66" stroke-width="1"/>
<rect x="1252" y="461" width="1" height="72" fill="#66da66"/>
<rect x="1247.5" y="468.5" width="10" height="64" fill="#fff" stroke="#66da66" stroke-width="1"/>
<rect x="1268" y="502" width="1" height="64" fill="#66da66"/>
<rect x="1263.5" y="528.5" width="10" height="4" fill="#fff" stroke="#66da66" stroke-width="1"/>
<rect x="1284" y="507" width="1" height="47" fill="#66da66"/>
<rect x="1279.5" y="507.5" width="10" height="18" fill="#000" stroke="#66da66" stroke-width="1"/>
<rect x="1300" y="498" width="1" height="51" fill="#66da66"/>
<rect x="1295.5" y="508.5" width="10" height="33" fill="#fff" stroke="#66da66" stroke-width="1"/>
<polyline points="4.5,169.0 20.5,176.7 36.5,177.9 52.5,165.0 68.5,160.3 84.5,157.3 100.5,155.2 116.5,150.2 132.5,145.5 148.5,153.3 164.5,160.3 180.5,177.9 196.5,196.6 212.5,216.0 228.5,229.5 244.5,237.1 260.5,242.3 276.5,250.0 292.5,260.5 308.5,272.3 324.5,285.5 340.5,305.0 356.5,321.0 372.5,334.0 388.5,340.4 404.5,341.8 420.5,326.0 436.5,305.0 452.5,278.0 468.5,245.7 484.5,232.8 500.5,221.1 516.5,217.6 532.5,203.0 548.5,209.4 564.5,207.0 580.5,190.0 596.5,177.0 612.5,171.2 628.5,166.0 644.5,166.0 660.5,172.3 676.5,169.6 692.5,179.5 708.5,194.9 724.5,209.0 740.5,216.0 756.5,226.6 772.5,235.0 788.5,241.5 804.5,248.3 820.5,254.6 836.5,272.9 852.5,290.5 868.5,311.6 884.5,325.6 900.5,339.7 916.5,364.3 932.5,381.9 948.5,399.4 964.5,419.4 980.5,431.1 996.5,442.8 1012.5,450.5 1028.5,457.0 1044.5,464.3 1060.5,468.0 1076.5,475.7 1092.5,483.9 1108.5,491.6 1124.5,494.5 1140.5,499.1 1156.5,499.6 1172.5,503.4 1188.5,502.7 1204.5,496.8 1220.5,490.9 1236.5,489.3 1252.5,495.6 1268.5,499.1 1284.5,499.6 1300.5,505.0" fill="none" stroke="#a6d4e6" stroke-width="2" stroke-linejoin="round" shape-rendering="auto"/>
<polyline points="4.5,170.0 20.5,185.4 36.5,188.0 52.5,158.4 68.5,149.8 84.5,144.1 100.5,144.6 116.5,136.6 132.5,130.5 148.5,149.8 164.5,166.2 180.5,201.3 196.5,246.5 212.5,264.0 228.5,278.1 244.5,279.8 260.5,279.8 276.5,284.0 292.5,296.9 308.5,311.0 324.5,342.0 340.5,359.0 356.5,376.0 372.5,388.7 388.5,386.3 404.5,377.4 420.5,337.0 436.5,276.2 452.5,231.6 468.5,180.5 484.5,173.6 500.5,164.2 516.5,172.0 532.5,154.2 548.5,183.0 564.5,183.0 580.5,159.5 596.5,135.8 612.5,134.5 628.5,134.8 644.5,144.3 660.5,165.0 676.5,158.6 692.5,185.6 708.5,213.7 724.5,240.5 740.5,247.1 756.5,261.2 772.5,268.2 788.5,272.9 804.5,278.0 820.5,283.4 836.5,309.5 852.5,339.0 868.5,365.5 884.5,379.0 900.5,395.0 916.5,434.6 932.5,446.3 948.5,472.1 964.5,489.0 980.5,496.7 996.5,503.8 1012.5,504.0 1028.5,502.7 1044.5,504.0 1060.5,502.0 1076.5,508.0 1092.5,516.5 1108.5,521.4 1124.5,520.7 1140.5,523.8 1156.5,517.9 1172.5,522.1 1188.5,512.0 1204.5,498.0 1220.5,488.6 1236.5,482.7 1252.5,495.6 1268.5,505.0 1284.5,505.0 1300.5,515.5" fill="none" stroke="#ee7a62" stroke-width="2" stroke-linejoin="round" shape-rendering="auto"/>
<path d="M176.5 158.5H182V165.5H184.5L179.25 169L174 165.5H176.5Z" fill="#3a0404" stroke="#b81a1a" stroke-width="1.1" shape-rendering="auto"/>
<path d="M816.5 229.5H822V236.5H824.5L819.25 240L814 236.5H816.5Z" fill="#3a0404" stroke="#b81a1a" stroke-width="1.1" shape-rendering="auto"/>
<path d="M1264.5 480.5H1270V487.5H1272.5L1267.25 491L1262 487.5H1264.5Z" fill="#3a0404" stroke="#b81a1a" stroke-width="1.1" shape-rendering="auto"/>
</g>
<rect x="4.5" y="4.5" width="1307" height="586" fill="none" stroke="#fff" stroke-width="1"/>
<rect x="1311" y="12" width="4" height="1" fill="#fff"/>
<text x="1316.8" y="16" fill="#fff" stroke="#fff" stroke-width="0.3" font-family="Liberation Sans" font-size="9.6" textLength="32.3" lengthAdjust="spacingAndGlyphs">0.69140</text>
<rect x="1311" y="46" width="4" height="1" fill="#fff"/>
<text x="1316.8" y="50" fill="#fff" stroke="#fff" stroke-width="0.3" font-family="Liberation Sans" font-size="9.6" textLength="32.3" lengthAdjust="spacingAndGlyphs">0.69100</text>
<rect x="1311" y="80" width="4" height="1" fill="#fff"/>
<text x="1316.8" y="84" fill="#fff" stroke="#fff" stroke-width="0.3" font-family="Liberation Sans" font-size="9.6" textLength="32.3" lengthAdjust="spacingAndGlyphs">0.69060</text>
<rect x="1311" y="114" width="4" height="1" fill="#fff"/>
<text x="1316.8" y="118" fill="#fff" stroke="#fff" stroke-width="0.3" font-family="Liberation Sans" font-size="9.6" textLength="32.3" lengthAdjust="spacingAndGlyphs">0.69020</text>
<rect x="1311" y="148" width="4" height="1" fill="#fff"/>
<text x="1316.8" y="152" fill="#fff" stroke="#fff" stroke-width="0.3" font-family="Liberation Sans" font-size="9.6" textLength="32.3" lengthAdjust="spacingAndGlyphs">0.68980</text>
<rect x="1311" y="182" width="4" height="1" fill="#fff"/>
<text x="1316.8" y="186" fill="#fff" stroke="#fff" stroke-width="0.3" font-family="Liberation Sans" font-size="9.6" textLength="32.3" lengthAdjust="spacingAndGlyphs">0.68940</text>
<rect x="1311" y="216" width="4" height="1" fill="#fff"/>
<text x="1316.8" y="220" fill="#fff" stroke="#fff" stroke-width="0.3" font-family="Liberation Sans" font-size="9.6" textLength="32.3" lengthAdjust="spacingAndGlyphs">0.68900</text>
<rect x="1311" y="250" width="4" height="1" fill="#fff"/>
<text x="1316.8" y="254" fill="#fff" stroke="#fff" stroke-width="0.3" font-family="Liberation Sans" font-size="9.6" textLength="32.3" lengthAdjust="spacingAndGlyphs">0.68860</text>
<rect x="1311" y="284" width="4" height="1" fill="#fff"/>
<text x="1316.8" y="288" fill="#fff" stroke="#fff" stroke-width="0.3" font-family="Liberation Sans" font-size="9.6" textLength="32.3" lengthAdjust="spacingAndGlyphs">0.68820</text>
<rect x="1311" y="318" width="4" height="1" fill="#fff"/>
<text x="1316.8" y="322" fill="#fff" stroke="#fff" stroke-width="0.3" font-family="Liberation Sans" font-size="9.6" textLength="32.3" lengthAdjust="spacingAndGlyphs">0.68780</text>
<rect x="1311" y="352" width="4" height="1" fill="#fff"/>
<text x="1316.8" y="356" fill="#fff" stroke="#fff" stroke-width="0.3" font-family="Liberation Sans" font-size="9.6" textLength="32.3" lengthAdjust="spacingAndGlyphs">0.68740</text>
<rect x="1311" y="386" width="4" height="1" fill="#fff"/>
<text x="1316.8" y="390" fill="#fff" stroke="#fff" stroke-width="0.3" font-family="Liberation Sans" font-size="9.6" textLength="32.3" lengthAdjust="spacingAndGlyphs">0.68700</text>
<rect x="1311" y="420" width="4" height="1" fill="#fff"/>
<text x="1316.8" y="424" fill="#fff" stroke="#fff" stroke-width="0.3" font-family="Liberation Sans" font-size="9.6" textLength="32.3" lengthAdjust="spacingAndGlyphs">0.68660</text>
<rect x="1311" y="454" width="4" height="1" fill="#fff"/>
<text x="1316.8" y="458" fill="#fff" stroke="#fff" stroke-width="0.3" font-family="Liberation Sans" font-size="9.6" textLength="32.3" lengthAdjust="spacingAndGlyphs">0.68620</text>
<rect x="1311" y="488" width="4" height="1" fill="#fff"/>
<text x="1316.8" y="492" fill="#fff" stroke="#fff" stroke-width="0.3" font-family="Liberation Sans" font-size="9.6" textLength="32.3" lengthAdjust="spacingAndGlyphs">0.68580</text>
<rect x="1311" y="522" width="4" height="1" fill="#fff"/>
<text x="1316.8" y="526" fill="#fff" stroke="#fff" stroke-width="0.3" font-family="Liberation Sans" font-size="9.6" textLength="32.3" lengthAdjust="spacingAndGlyphs">0.68540</text>
<rect x="1311" y="556" width="4" height="1" fill="#fff"/>
<text x="1316.8" y="560" fill="#fff" stroke="#fff" stroke-width="0.3" font-family="Liberation Sans" font-size="9.6" textLength="32.3" lengthAdjust="spacingAndGlyphs">0.68500</text>
<rect x="1314" y="127" width="39" height="11" fill="#8c949c"/>
<text x="1316.8" y="136" fill="#10141c" stroke="#10141c" stroke-width="0.25" font-family="Liberation Sans" font-size="9.6" textLength="32.3" lengthAdjust="spacingAndGlyphs">0.68999</text>
<rect x="4" y="590" width="1" height="4" fill="#fff"/>
<text x="3.7" y="603" fill="#fff" stroke="#fff" stroke-width="0.3" font-family="Liberation Sans" font-size="10" textLength="4.5" lengthAdjust="spacingAndGlyphs">6</text>
<text x="11.7" y="603" fill="#fff" stroke="#fff" stroke-width="0.3" font-family="Liberation Sans" font-size="10" textLength="16.5" lengthAdjust="spacingAndGlyphs">Nov</text>
<text x="32.2" y="603" fill="#fff" stroke="#fff" stroke-width="0.3" font-family="Liberation Sans" font-size="10" textLength="19.8" lengthAdjust="spacingAndGlyphs">2019</text>
<rect x="68" y="590" width="1" height="4" fill="#fff"/>
<text x="67.6" y="603" fill="#fff" stroke="#fff" stroke-width="0.3" font-family="Liberation Sans" font-size="10" textLength="4.5" lengthAdjust="spacingAndGlyphs">6</text>
<text x="75.8" y="603" fill="#fff" stroke="#fff" stroke-width="0.3" font-family="Liberation Sans" font-size="10" textLength="17" lengthAdjust="spacingAndGlyphs">Nov</text>
<text x="96.6" y="603" fill="#fff" stroke="#fff" stroke-width="0.3" font-family="Liberation Sans" font-size="10" textLength="22.8" lengthAdjust="spacingAndGlyphs">11:00</text>
<rect x="132" y="590" width="1" height="4" fill="#fff"/>
<text x="131.6" y="603" fill="#fff" stroke="#fff" stroke-width="0.3" font-family="Liberation Sans" font-size="10" textLength="4.5" lengthAdjust="spacingAndGlyphs">6</text>
<text x="139.8" y="603" fill="#fff" stroke="#fff" stroke-width="0.3" font-family="Liberation Sans" font-size="10" textLength="17" lengthAdjust="spacingAndGlyphs">Nov</text>
<text x="160.6" y="603" fill="#fff" stroke="#fff" stroke-width="0.3" font-family="Liberation Sans" font-size="10" textLength="22.8" lengthAdjust="spacingAndGlyphs">15:00</text>
<rect x="196" y="590" width="1" height="4" fill="#fff"/>
<text x="195.6" y="603" fill="#fff" stroke="#fff" stroke-width="0.3" font-family="Liberation Sans" font-size="10" textLength="4.5" lengthAdjust="spacingAndGlyphs">6</text>
<text x="203.8" y="603" fill="#fff" stroke="#fff" stroke-width="0.3" font-family="Liberation Sans" font-size="10" textLength="17" lengthAdjust="spacingAndGlyphs">Nov</text>
<text x="224.6" y="603" fill="#fff" stroke="#fff" stroke-width="0.3" font-family="Liberation Sans" font-size="10" textLength="22.8" lengthAdjust="spacingAndGlyphs">19:00</text>
<rect x="260" y="590" width="1" height="4" fill="#fff"/>
<text x="259.6" y="603" fill="#fff" stroke="#fff" stroke-width="0.3" font-family="Liberation Sans" font-size="10" textLength="4.5" lengthAdjust="spacingAndGlyphs">6</text>
<text x="267.8" y="603" fill="#fff" stroke="#fff" stroke-width="0.3" font-family="Liberation Sans" font-size="10" textLength="17" lengthAdjust="spacingAndGlyphs">Nov</text>
<text x="288.6" y="603" fill="#fff" stroke="#fff" stroke-width="0.3" font-family="Liberation Sans" font-size="10" textLength="22.8" lengthAdjust="spacingAndGlyphs">23:00</text>
<rect x="324" y="590" width="1" height="4" fill="#fff"/>
<text x="323.6" y="603" fill="#fff" stroke="#fff" stroke-width="0.3" font-family="Liberation Sans" font-size="10" textLength="4.5" lengthAdjust="spacingAndGlyphs">7</text>
<text x="331.8" y="603" fill="#fff" stroke="#fff" stroke-width="0.3" font-family="Liberation Sans" font-size="10" textLength="17" lengthAdjust="spacingAndGlyphs">Nov</text>
<text x="352.6" y="603" fill="#fff" stroke="#fff" stroke-width="0.3" font-family="Liberation Sans" font-size="10" textLength="22.8" lengthAdjust="spacingAndGlyphs">03:00</text>
<rect x="388" y="590" width="1" height="4" fill="#fff"/>
<text x="387.6" y="603" fill="#fff" stroke="#fff" stroke-width="0.3" font-family="Liberation Sans" font-size="10" textLength="4.5" lengthAdjust="spacingAndGlyphs">7</text>
<text x="395.8" y="603" fill="#fff" stroke="#fff" stroke-width="0.3" font-family="Liberation Sans" font-size="10" textLength="17" lengthAdjust="spacingAndGlyphs">Nov</text>
<text x="416.6" y="603" fill="#fff" stroke="#fff" stroke-width="0.3" font-family="Liberation Sans" font-size="10" textLength="22.8" lengthAdjust="spacingAndGlyphs">07:00</text>
<rect x="452" y="590" width="1" height="4" fill="#fff"/>
<text x="451.6" y="603" fill="#fff" stroke="#fff" stroke-width="0.3" font-family="Liberation Sans" font-size="10" textLength="4.5" lengthAdjust="spacingAndGlyphs">7</text>
<text x="459.8" y="603" fill="#fff" stroke="#fff" stroke-width="0.3" font-family="Liberation Sans" font-size="10" textLength="17" lengthAdjust="spacingAndGlyphs">Nov</text>
<text x="480.6" y="603" fill="#fff" stroke="#fff" stroke-width="0.3" font-family="Liberation Sans" font-size="10" textLength="22.8" lengthAdjust="spacingAndGlyphs">11:00</text>
<rect x="516" y="590" width="1" height="4" fill="#fff"/>
<text x="515.6" y="603" fill="#fff" stroke="#fff" stroke-width="0.3" font-family="Liberation Sans" font-size="10" textLength="4.5" lengthAdjust="spacingAndGlyphs">7</text>
<text x="523.8" y="603" fill="#fff" stroke="#fff" stroke-width="0.3" font-family="Liberation Sans" font-size="10" textLength="17" lengthAdjust="spacingAndGlyphs">Nov</text>
<text x="544.6" y="603" fill="#fff" stroke="#fff" stroke-width="0.3" font-family="Liberation Sans" font-size="10" textLength="22.8" lengthAdjust="spacingAndGlyphs">15:00</text>
<rect x="580" y="590" width="1" height="4" fill="#fff"/>
<text x="579.6" y="603" fill="#fff" stroke="#fff" stroke-width="0.3" font-family="Liberation Sans" font-size="10" textLength="4.5" lengthAdjust="spacingAndGlyphs">7</text>
<text x="587.8" y="603" fill="#fff" stroke="#fff" stroke-width="0.3" font-family="Liberation Sans" font-size="10" textLength="17" lengthAdjust="spacingAndGlyphs">Nov</text>
<text x="608.6" y="603" fill="#fff" stroke="#fff" stroke-width="0.3" font-family="Liberation Sans" font-size="10" textLength="22.8" lengthAdjust="spacingAndGlyphs">19:00</text>
<rect x="644" y="590" width="1" height="4" fill="#fff"/>
<text x="643.6" y="603" fill="#fff" stroke="#fff" stroke-width="0.3" font-family="Liberation Sans" font-size="10" textLength="4.5" lengthAdjust="spacingAndGlyphs">7</text>
<text x="651.8" y="603" fill="#fff" stroke="#fff" stroke-width="0.3" font-family="Liberation Sans" font-size="10" textLength="17" lengthAdjust="spacingAndGlyphs">Nov</text>
<text x="672.6" y="603" fill="#fff" stroke="#fff" stroke-width="0.3" font-family="Liberation Sans" font-size="10" textLength="22.8" lengthAdjust="spacingAndGlyphs">23:00</text>
<rect x="708" y="590" width="1" height="4" fill="#fff"/>
<text x="707.6" y="603" fill="#fff" stroke="#fff" stroke-width="0.3" font-family="Liberation Sans" font-size="10" textLength="4.5" lengthAdjust="spacingAndGlyphs">8</text>
<text x="715.8" y="603" fill="#fff" stroke="#fff" stroke-width="0.3" font-family="Liberation Sans" font-size="10" textLength="17" lengthAdjust="spacingAndGlyphs">Nov</text>
<text x="736.6" y="603" fill="#fff" stroke="#fff" stroke-width="0.3" font-family="Liberation Sans" font-size="10" textLength="22.8" lengthAdjust="spacingAndGlyphs">03:00</text>
<rect x="772" y="590" width="1" height="4" fill="#fff"/>
<text x="771.6" y="603" fill="#fff" stroke="#fff" stroke-width="0.3" font-family="Liberation Sans" font-size="10" textLength="4.5" lengthAdjust="spacingAndGlyphs">8</text>
<text x="779.8" y="603" fill="#fff" stroke="#fff" stroke-width="0.3" font-family="Liberation Sans" font-size="10" textLength="17" lengthAdjust="spacingAndGlyphs">Nov</text>
<text x="800.6" y="603" fill="#fff" stroke="#fff" stroke-width="0.3" font-family="Liberation Sans" font-size="10" textLength="22.8" lengthAdjust="spacingAndGlyphs">07:00</text>
<rect x="836" y="590" width="1" height="4" fill="#fff"/>
<text x="835.6" y="603" fill="#fff" stroke="#fff" stroke-width="0.3" font-family="Liberation Sans" font-size="10" textLength="4.5" lengthAdjust="spacingAndGlyphs">8</text>
<text x="843.8" y="603" fill="#fff" stroke="#fff" stroke-width="0.3" font-family="Liberation Sans" font-size="10" textLength="17" lengthAdjust="spacingAndGlyphs">Nov</text>
<text x="864.6" y="603" fill="#fff" stroke="#fff" stroke-width="0.3" font-family="Liberation Sans" font-size="10" textLength="22.8" lengthAdjust="spacingAndGlyphs">11:00</text>
<rect x="900" y="590" width="1" height="4" fill="#fff"/>
<text x="899.6" y="603" fill="#fff" stroke="#fff" stroke-width="0.3" font-family="Liberation Sans" font-size="10" textLength="4.5" lengthAdjust="spacingAndGlyphs">8</text>
<text x="907.8" y="603" fill="#fff" stroke="#fff" stroke-width="0.3" font-family="Liberation Sans" font-size="10" textLength="17" lengthAdjust="spacingAndGlyphs">Nov</text>
<text x="928.6" y="603" fill="#fff" stroke="#fff" stroke-width="0.3" font-family="Liberation Sans" font-size="10" textLength="22.8" lengthAdjust="spacingAndGlyphs">15:00</text>
<rect x="964" y="590" width="1" height="4" fill="#fff"/>
<text x="963.6" y="603" fill="#fff" stroke="#fff" stroke-width="0.3" font-family="Liberation Sans" font-size="10" textLength="4.5" lengthAdjust="spacingAndGlyphs">8</text>
<text x="971.8" y="603" fill="#fff" stroke="#fff" stroke-width="0.3" font-family="Liberation Sans" font-size="10" textLength="17" lengthAdjust="spacingAndGlyphs">Nov</text>
<text x="992.6" y="603" fill="#fff" stroke="#fff" stroke-width="0.3" font-family="Liberation Sans" font-size="10" textLength="22.8" lengthAdjust="spacingAndGlyphs">19:00</text>
<rect x="1028" y="590" width="1" height="4" fill="#fff"/>
<text x="1027.6" y="603" fill="#fff" stroke="#fff" stroke-width="0.3" font-family="Liberation Sans" font-size="10" textLength="4.5" lengthAdjust="spacingAndGlyphs">8</text>
<text x="1035.8" y="603" fill="#fff" stroke="#fff" stroke-width="0.3" font-family="Liberation Sans" font-size="10" textLength="17" lengthAdjust="spacingAndGlyphs">Nov</text>
<text x="1056.6" y="603" fill="#fff" stroke="#fff" stroke-width="0.3" font-family="Liberation Sans" font-size="10" textLength="22.8" lengthAdjust="spacingAndGlyphs">23:00</text>
<rect x="1092" y="590" width="1" height="4" fill="#fff"/>
<text x="1092.1" y="603" fill="#fff" stroke="#fff" stroke-width="0.3" font-family="Liberation Sans" font-size="10" textLength="9" lengthAdjust="spacingAndGlyphs">11</text>
<text x="1104.7" y="603" fill="#fff" stroke="#fff" stroke-width="0.3" font-family="Liberation Sans" font-size="10" textLength="15.6" lengthAdjust="spacingAndGlyphs">Nov</text>
<text x="1124.0" y="603" fill="#fff" stroke="#fff" stroke-width="0.3" font-family="Liberation Sans" font-size="10" textLength="24" lengthAdjust="spacingAndGlyphs">03:00</text>
<rect x="1156" y="590" width="1" height="4" fill="#fff"/>
<text x="1156.1" y="603" fill="#fff" stroke="#fff" stroke-width="0.3" font-family="Liberation Sans" font-size="10" textLength="9" lengthAdjust="spacingAndGlyphs">11</text>
<text x="1168.7" y="603" fill="#fff" stroke="#fff" stroke-width="0.3" font-family="Liberation Sans" font-size="10" textLength="15.6" lengthAdjust="spacingAndGlyphs">Nov</text>
<text x="1188.0" y="603" fill="#fff" stroke="#fff" stroke-width="0.3" font-family="Liberation Sans" font-size="10" textLength="24" lengthAdjust="spacingAndGlyphs">07:00</text>
<rect x="1220" y="590" width="1" height="4" fill="#fff"/>
<text x="1220.1" y="603" fill="#fff" stroke="#fff" stroke-width="0.3" font-family="Liberation Sans" font-size="10" textLength="9" lengthAdjust="spacingAndGlyphs">11</text>
<text x="1232.7" y="603" fill="#fff" stroke="#fff" stroke-width="0.3" font-family="Liberation Sans" font-size="10" textLength="15.6" lengthAdjust="spacingAndGlyphs">Nov</text>
<text x="1252.0" y="603" fill="#fff" stroke="#fff" stroke-width="0.3" font-family="Liberation Sans" font-size="10" textLength="24" lengthAdjust="spacingAndGlyphs">11:00</text>
<rect x="1284" y="590" width="1" height="4" fill="#fff"/>
<text x="1284.1" y="603" fill="#fff" stroke="#fff" stroke-width="0.3" font-family="Liberation Sans" font-size="10" textLength="9" lengthAdjust="spacingAndGlyphs">11</text>
<text x="1296.7" y="603" fill="#fff" stroke="#fff" stroke-width="0.3" font-family="Liberation Sans" font-size="10" textLength="15.6" lengthAdjust="spacingAndGlyphs">Nov</text>
<text x="1316.0" y="603" fill="#fff" stroke="#fff" stroke-width="0.3" font-family="Liberation Sans" font-size="10" textLength="24" lengthAdjust="spacingAndGlyphs">15:00</text>
<text x="46" y="18" fill="#fff" stroke="#fff" stroke-width="0.3" font-family="Liberation Sans" font-size="10" textLength="55" lengthAdjust="spacingAndGlyphs">AUDUSD,H1</text>
<rect x="8.5" y="8.5" width="13" height="11" fill="#f0f0f0" stroke="#e8e8f0"/><rect x="9" y="9" width="12" height="2" fill="#8080d0"/>
<rect x="10" y="12.0" width="4" height="1.5" fill="#e07060"/><rect x="16" y="12.0" width="4" height="1.5" fill="#6070d0"/>
<rect x="10" y="14.5" width="4" height="1.5" fill="#e07060"/><rect x="16" y="14.5" width="4" height="1.5" fill="#6070d0"/>
<rect x="10" y="17.0" width="4" height="1.5" fill="#e07060"/><rect x="16" y="17.0" width="4" height="1.5" fill="#6070d0"/>
<rect x="26" y="9" width="7" height="10" fill="#3030e0"/><rect x="33" y="9" width="7" height="10" fill="#d03030"/><path d="M30 10h6v2h-2v6h-2v-6h-2z" fill="#e0e0e0"/>
</svg>
<div class="a" style="left:0;top:715px;width:1366px;height:2px;background:#f8f8f8"></div>
<div class="a" style="left:0;top:717px;width:1366px;height:1px;background:#303030"></div>
<div class="a" style="left:0;top:718px;width:1366px;height:19px;background:#efefef"></div>
<div class="a" style="left:0;top:718px;width:2px;height:19px;background:#606060"></div>
<div class="a" style="left:1364px;top:104px;width:2px;height:614px;background:#f0f0f0"></div>
<div class="a" style="left:15px;top:722px;font-size:12px;color:#707070;white-space:nowrap;line-height:1;letter-spacing:-0.95px">EURUSD,H4</div>
<div class="a" style="left:100px;top:722px;font-size:12px;color:#707070;white-space:nowrap;line-height:1;letter-spacing:-0.95px">GBPUSD,H4</div>
<div class="a" style="left:185px;top:722px;font-size:12px;color:#707070;white-space:nowrap;line-height:1;letter-spacing:-0.95px">USDCHF,H4</div>
<div class="a" style="left:271px;top:722px;font-size:12px;color:#707070;white-space:nowrap;line-height:1;letter-spacing:-0.95px">USDCAD,H4</div>
<div class="a" style="left:360px;top:722px;font-size:12px;color:#707070;white-space:nowrap;line-height:1;letter-spacing:-0.95px">AUDUSD,H4</div>
<div class="a" style="left:449px;top:722px;font-size:12px;color:#707070;white-space:nowrap;line-height:1;letter-spacing:-0.95px">EURUSD,H1</div>
<div class="a" style="left:533px;top:722px;font-size:12px;color:#707070;white-space:nowrap;line-height:1;letter-spacing:-0.95px">EURCAD,H1</div>
<div class="a" style="left:619px;top:722px;font-size:12px;color:#707070;white-space:nowrap;line-height:1;letter-spacing:-0.95px">EURGBP,H1</div>
<div class="a" style="left:704px;top:722px;font-size:12px;color:#707070;white-space:nowrap;line-height:1;letter-spacing:-0.95px">EURJPY,H1</div>
<div class="a" style="left:784px;top:722px;font-size:12px;color:#707070;white-space:nowrap;line-height:1;letter-spacing:-0.95px">EURCHF,H1</div>
<div class="a" style="left:870px;top:722px;font-size:12px;color:#707070;white-space:nowrap;line-height:1;letter-spacing:-0.95px">AUDUSD,H1</div>
<div class="a" style="left:959px;top:722px;font-size:12px;color:#707070;white-space:nowrap;line-height:1;letter-spacing:-0.95px">NZDUSD,H1</div>
<div class="a" style="left:1046px;top:722px;font-size:12px;color:#707070;white-space:nowrap;line-height:1;letter-spacing:-0.95px">USDCHF,H1</div>
<div class="a" style="left:1133px;top:722px;font-size:12px;color:#707070;white-space:nowrap;line-height:1;letter-spacing:-0.95px">USDCAD,H1</div>
<div class="a" style="left:1221px;top:722px;font-size:12px;color:#707070;white-space:nowrap;line-height:1;letter-spacing:-0.95px">GBPUSD,H1</div>
<div class="a" style="left:1305px;top:718px;width:12px;height:19px;overflow:hidden"><div class="a" style="left:0px;top:4px;font-size:12px;color:#707070;white-space:nowrap;line-height:1;letter-spacing:-0.95px">GBPUSD,H1</div></div>
<div class="a" style="left:88px;top:720px;width:1px;height:14px;background:#707070"></div>
<div class="a" style="left:173px;top:720px;width:1px;height:14px;background:#707070"></div>
<div class="a" style="left:258px;top:720px;width:1px;height:14px;background:#707070"></div>
<div class="a" style="left:346px;top:720px;width:1px;height:14px;background:#707070"></div>
<div class="a" style="left:434px;top:720px;width:1px;height:14px;background:#707070"></div>
<div class="a" style="left:520px;top:720px;width:1px;height:14px;background:#707070"></div>
<div class="a" style="left:606px;top:720px;width:1px;height:14px;background:#707070"></div>
<div class="a" style="left:691px;top:720px;width:1px;height:14px;background:#707070"></div>
<div class="a" style="left:771px;top:720px;width:1px;height:14px;background:#707070"></div>
<div class="a" style="left:857px;top:720px;width:1px;height:14px;background:#707070"></div>
<div class="a" style="left:945px;top:720px;width:1px;height:14px;background:#707070"></div>
<div class="a" style="left:1034px;top:720px;width:1px;height:14px;background:#707070"></div>
<div class="a" style="left:1120px;top:720px;width:1px;height:14px;background:#707070"></div>
<div class="a" style="left:1207px;top:720px;width:1px;height:14px;background:#707070"></div>
<div class="a" style="left:1294px;top:720px;width:1px;height:14px;background:#707070"></div>
<svg class="a" style="left:1326px;top:724px" width="8" height="10" viewBox="0 0 8 10"><path d="M6 1v8L1 5z" fill="#9a9a9a"/></svg>
<svg class="a" style="left:1348px;top:724px" width="8" height="10" viewBox="0 0 8 10"><path d="M2 1v8l5-4z" fill="#111"/></svg>
<div class="a" style="left:0;top:737px;width:1366px;height:1px;background:#d8d8d8"></div>
<div class="a" style="left:0;top:738px;width:1366px;height:30px;background:linear-gradient(#2a2a2c 0,#0c0c0d 3px,#060607 100%)"></div>
<div class="a" style="left:860px;top:740px;width:110px;height:28px;background:radial-gradient(ellipse at 50% 50%,rgba(40,40,44,.8),rgba(0,0,0,0) 70%)"></div>
<div class="a" style="left:930px;top:742px;width:22px;height:26px;background:#50486a;filter:blur(4px);opacity:.45;transform:skewX(-12deg)"></div>
<svg class="a" style="left:7px;top:732px" width="40" height="40" viewBox="0 0 40 40"><defs><radialGradient id="orb" cx="50%" cy="40%" r="60%"><stop offset="0" stop-color="#7ac8ee"/><stop offset=".45" stop-color="#2a78b8"/><stop offset="1" stop-color="#082448"/></radialGradient><linearGradient id="gl" x1="0" y1="0" x2="0" y2="1"><stop offset="0" stop-color="#fff" stop-opacity=".55"/><stop offset="1" stop-color="#fff" stop-opacity="0"/></linearGradient></defs><circle cx="20" cy="20" r="18.5" fill="url(#orb)" stroke="#9ab8d0" stroke-width="1.2"/><path d="M11 13c3-1.5 5-.5 8 1v7c-3-1.5-5-2.5-8-1z" fill="#e85a28"/><path d="M20 14c3 1.5 6 1.5 9 0v7c-3 1.5-6 1.5-9 0z" fill="#8ac030"/><path d="M11 21c3-1.5 5-.5 8 1v7c-3-1.5-5-2.5-8-1z" fill="#2a98e0"/><path d="M20 22c3 1.5 6 1.5 9 0v7c-3 1.5-6 1.5-9 0z" fill="#f0c020"/><ellipse cx="20" cy="11" rx="13" ry="8" fill="url(#gl)"/></svg>
<svg class="a" style="left:70px;top:745px" width="20" height="18" viewBox="0 0 20 18"><path d="M1 4h7l2 2h9v11H1z" fill="#e8d890" stroke="#b8a050"/><rect x="4" y="9" width="12" height="7" fill="#8ac8e8" stroke="#4a90b8"/></svg>
<svg class="a" style="left:117px;top:744px" width="20" height="20" viewBox="0 0 20 20"><rect x="1" y="1" width="18" height="18" fill="#9ac0e0" stroke="#5a90c0"/><circle cx="10" cy="10" r="6" fill="#f09020"/><path d="M8 7v6l5-3z" fill="#fff"/></svg>
<svg class="a" style="left:161px;top:744px" width="20" height="20" viewBox="0 0 20 20"><rect x="1" y="1" width="18" height="18" rx="2" fill="#e8a050" stroke="#a86020"/><path d="M3 8l3 4 2-3 2 3 2-3 2 3 3-4" stroke="#5a2a10" stroke-width="2.5" fill="none"/></svg>
<svg class="a" style="left:208px;top:744px" width="20" height="20" viewBox="0 0 20 20"><ellipse cx="10" cy="10" rx="8" ry="8.5" fill="#d01818"/><ellipse cx="10" cy="10" rx="3.5" ry="6" fill="#140606"/></svg>
<svg class="a" style="left:255px;top:745px" width="20" height="18" viewBox="0 0 20 18"><path d="M2 5l14-4 2 12-12 4z" fill="#f0c830"/><circle cx="8" cy="7" r="1.5" fill="#b02010"/><circle cx="13" cy="6" r="1.5" fill="#b02010"/><circle cx="10" cy="11" r="1.5" fill="#b02010"/><circle cx="6" cy="12" r="1.2" fill="#b02010"/></svg>
<svg class="a" style="left:300px;top:744px" width="20" height="20" viewBox="0 0 20 20"><rect x="2" y="3" width="15" height="11" fill="#6a9ab8" stroke="#4a5a6a"/><path d="M4 13l11-8" stroke="#a8d0e8"/><rect x="4" y="15" width="12" height="3" fill="#505860"/></svg>
<div class="a" style="left:336px;top:739px;width:43px;height:28px;border:1px solid #6a6a6a;border-radius:3px;background:linear-gradient(160deg,#5a5a5a 0,#3a3a3a 40%,#1e1e1e 60%,#2a2a2a 100%)"></div>
<div class="a" style="left:382px;top:739px;width:43px;height:28px;border:1px solid #6a6a6a;border-radius:3px;background:linear-gradient(160deg,#5a5a5a 0,#3a3a3a 40%,#1e1e1e 60%,#2a2a2a 100%)"></div>
<div class="a" style="left:382px;top:739px;width:43px;height:28px;border:1px solid #9a9a9a;border-radius:3px;background:linear-gradient(160deg,#9a9a9a 0,#7a7a7a 40%,#555 60%,#666 100%)"></div>
<svg class="a" style="left:347px;top:743px" width="21" height="21" viewBox="0 0 21 21"><circle cx="10.5" cy="10.5" r="9" fill="#dd4433"/><path d="M10.5 10.5L3 6A9 9 0 0 0 8 19.5z" fill="#2a9a40"/><path d="M10.5 10.5L8 19.5A9 9 0 0 0 19.5 10.5z" fill="#f4c430"/><circle cx="10.5" cy="10.5" r="4.2" fill="#fff"/><circle cx="10.5" cy="10.5" r="3.2" fill="#4a8ae0"/></svg>
<svg class="a" style="left:393px;top:743px" width="22" height="22" viewBox="0 0 22 22"><circle cx="6" cy="14" r="5" fill="#e8b830"/><circle cx="16" cy="14" r="5" fill="#3070c8"/><circle cx="11" cy="7" r="5" fill="#40a040"/><circle cx="11" cy="12" r="4.5" fill="#f4e8c0" stroke="#d89030" stroke-width="1"/><text x="11" y="15.5" font-size="8" font-family="Liberation Sans" font-weight="bold" fill="#c86020" text-anchor="middle">5</text></svg>
<div class="a" style="left:1152px;top:745px;font-size:12px;color:#e8e8e8;white-space:nowrap;line-height:1">RU</div>
<svg class="a" style="left:1182px;top:751px" width="12" height="7" viewBox="0 0 12 7"><path d="M1 6h10L6 1z" fill="#e0e0e0"/></svg>
<svg class="a" style="left:1204px;top:745px" width="18" height="20" viewBox="0 0 18 20"><path d="M1.5 2v17" stroke="#ddd"/><path d="M2 3h7l2 2h5v6H9l-2-2H2z" fill="#f4f4f4"/><circle cx="12" cy="14" r="4.5" fill="#d83030"/><path d="M10 12l4 4M14 12l-4 4" stroke="#fff" stroke-width="1.2"/></svg>
<svg class="a" style="left:1228px;top:748px" width="16" height="14" viewBox="0 0 16 14"><rect x="1" y="11" width="2" height="2" fill="#eee"/><rect x="4" y="9" width="2" height="4" fill="#eee"/><rect x="7" y="6" width="2" height="7" fill="#eee"/><rect x="10" y="3" width="2" height="10" fill="#777"/><rect x="13" y="1" width="2" height="12" fill="#777"/></svg>
<svg class="a" style="left:1252px;top:747px" width="16" height="16" viewBox="0 0 16 16"><path d="M1 5h3l4-4v14l-4-4H1z" fill="#e8e8e8"/><path d="M10 5a4 4 0 0 1 0 6M12 3a7 7 0 0 1 0 10" stroke="#ddd" fill="none" stroke-width="1.3"/></svg>
<div class="a" style="left:1299px;top:748px;font-size:12px;color:#f0f0f0;white-space:nowrap;line-height:1;letter-spacing:-0.3px">19:34</div>
<div class="a" style="left:1352px;top:739px;width:14px;height:29px;border:1px solid #3a3a3a;background:linear-gradient(90deg,#2a2a2a,#1a1a1a)"></div>
</body></html>
